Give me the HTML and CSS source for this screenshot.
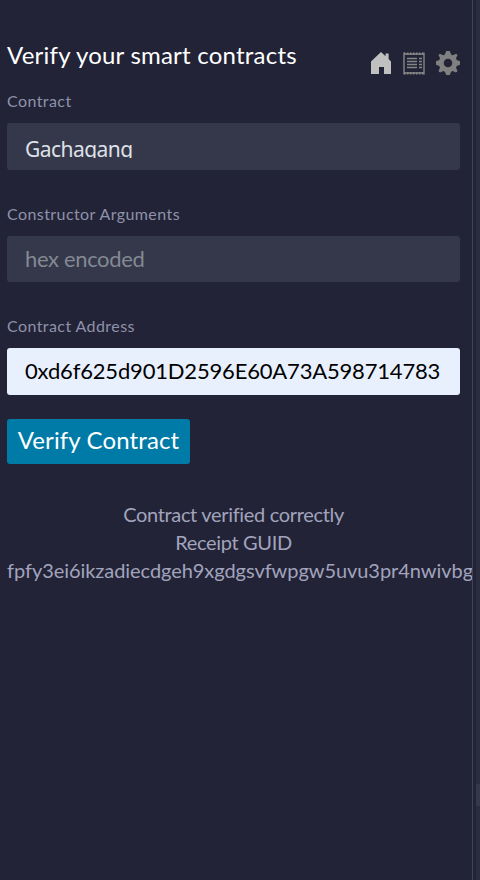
FILE: index.html
```html
<!DOCTYPE html>
<html lang="en">
<head>
<meta charset="utf-8">
<title>Verify your smart contracts</title>
<link rel="stylesheet" href="styles.css">
</head>
<body>
<main class="panel">
  <header class="header">
    <h1 class="title">Verify your smart contracts</h1>
    <nav class="nav">
      <svg class="icon-home" width="20" height="22" viewBox="0 0 20 22"><path fill="#c0c0c0" d="M0 9.5 10 0l4.6 4.2V1.5h3v5.6L20 9.5V22h-7v-7H8v7H0z"/></svg>
      <svg class="icon-receipt" width="22" height="23" viewBox="0 0 22 23"><path fill="none" stroke="#858585" stroke-width="1.4" d="M1 .5v22M21 .5v22M1 21h20M1 2h20"/><path fill="none" stroke="#858585" stroke-width="2.6" stroke-dasharray="1.5 1.5" d="M1 1.8h20M1 21.2h20"/><path stroke="#858585" stroke-width="1.4" d="M4 6.5h10M4 9.5h10M4 12.5h10M4 15.5h10M16 6.5h3M16 9.5h3M16 12.5h3M16 15.5h3"/></svg>
      <svg class="icon-gear" width="24" height="24" viewBox="0 0 24 24"><path fill="#808080" fill-rule="evenodd" d="M10.2 0h3.6l1.3 3.5 1.8.7 3.2-1.5 1.4 1.4L20 7.3l.7 1.7 3.3 1.3v3.4L20.7 15l-.7 1.7 1.5 3.3-1.5 1.5-3.3-1.5-1.6.7-1.3 3.3h-3.6l-1.3-3.3-1.6-.7L4 21.5 2.5 20 4 16.7 3.3 15 0 13.7v-3.4L3.3 9 4 7.3 2.5 4.1l1.4-1.4 3.2 1.5 1.8-.7zM12 7.7a4.3 4.3 0 1 0 0 8.6 4.3 4.3 0 0 0 0-8.6z"/></svg>
    </nav>
  </header>
  <section class="field">
    <div class="label">Contract</div>
    <div class="input select"><span class="selected">Gachagang</span></div>
  </section>
  <section class="field">
    <div class="label">Constructor Arguments</div>
    <div class="input placeholder">hex encoded</div>
  </section>
  <section class="field">
    <div class="label">Contract Address</div>
    <div class="input filled">0xd6f625d901D2596E60A73A598714783</div>
  </section>
  <button class="button">Verify Contract</button>
  <div class="result">
    <div class="status">Contract verified correctly</div>
    <div class="receipt">Receipt GUID</div>
    <div class="guid">fpfy3ei6ikzadiecdgeh9xgdgsvfwpgw5uvu3pr4nwivbg</div>
  </div>
</main>
<aside class="edge"><div class="thumb"></div></aside>
</body>
</html>
```
FILE: styles.css
```css
* { box-sizing: border-box; }
body {
  display: flex;
  height: 880px;
  margin: 0;
  overflow: hidden;
  background: #222336;
  color: #a2a3bd;
  font-family: Lato, "Noto Sans", sans-serif;
}
.panel {
  width: 473px;
  height: 880px;
  padding: 38px 12px 0 7px;
  border-right: 1px solid #3f4455;
  overflow: hidden;
}
.header { display: flex; justify-content: space-between; height: 50px; }
.title {
  margin: 0;
  color: #fff;
  font-size: 24px;
  font-weight: 400;
  line-height: 34px;
  letter-spacing: 0.22px;
  white-space: nowrap;
}
.nav { display: flex; padding-top: 13px; }
.icon-home { margin: 1px 12px 0 0; }
.icon-receipt { margin: 1px 11px 0 0; }
.field { height: 112.5px; }
.label { height: 35px; font-size: 16px; line-height: 25px; letter-spacing: 0.42px; color: #8f92aa; }
.input {
  width: 453px;
  height: 47px;
  padding: 0 18px;
  border-radius: 3px;
  background: #35374b;
  font-size: 22px;
  line-height: 45px;
  white-space: nowrap;
}
.select { padding-top: 12px; color: #dfe1e8; }
.selected {
  display: block;
  height: 23px;
  font-family: "Noto Sans", sans-serif;
  font-size: 21px;
  line-height: 28px;
  letter-spacing: -0.55px;
  overflow: hidden;
}
.placeholder { height: 46px; letter-spacing: -0.35px; color: #838a93; }
.filled { letter-spacing: -0.18px; background: #e8f0fe; color: #000; }
.button {
  display: block;
  width: 183px;
  height: 45px;
  margin: -7px 0 0;
  padding: 0 0 3px;
  border: 0;
  border-radius: 3px;
  background: #007aa6;
  color: #fff;
  font: 24px/42px Lato, "Noto Sans", sans-serif;
  letter-spacing: 0.13px;
}
.result { width: 453px; margin-top: 36px; font-size: 20px; line-height: 28px; text-align: center; white-space: nowrap; }
.status, .receipt { letter-spacing: -0.33px; }
.guid { text-align: left; letter-spacing: -0.06px; }
.edge { width: 4px; height: 880px; margin-left: 3px; padding-top: 784px; background: #2a2c3f; }
.thumb { height: 22px; background: #35374b; }
```
